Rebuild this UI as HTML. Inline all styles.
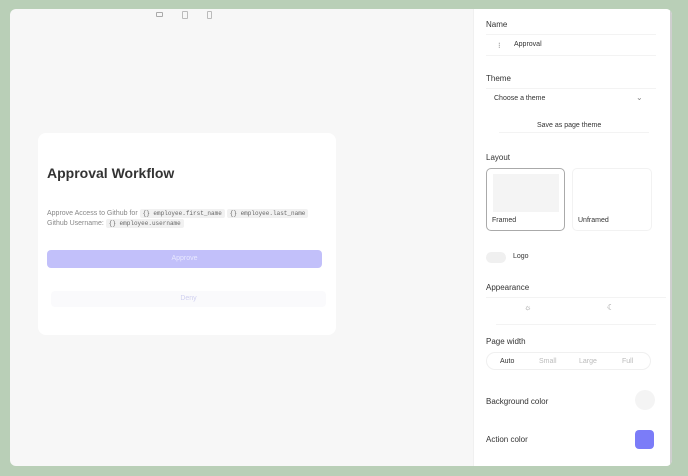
<!DOCTYPE html>
<html><head><style>
*{box-sizing:border-box;margin:0;padding:0}
body{width:688px;height:476px;background:#b9cfb7;font-family:"Liberation Sans",sans-serif;position:relative;overflow:hidden}
.win{position:absolute;left:10px;top:9px;width:662px;height:457px;background:#f7f7f7;border-radius:6px;overflow:hidden}
.panel{position:absolute;left:463px;top:0;width:197px;height:457px;background:#fff;border-left:1px solid #f0f0f0}
.sb{position:absolute;left:660px;top:0;width:2px;height:457px;background:#cfcfcf}
.card{position:absolute;left:28px;top:124px;width:298px;height:202px;background:#fff;border-radius:8px}
.lbl{position:absolute;font-size:8px;color:#333}
.code{font-family:"Liberation Mono",monospace;font-size:6px;background:#f1f1f1;padding:1px 3px;border-radius:2px;color:#666}
.line{position:absolute;height:1px;background:#f3f3f3}
</style></head><body>
<div class="win">
 <div style="position:absolute;left:146px;top:3px;width:7px;height:5px;border:1px solid #aaa;border-radius:1px"></div>
 <div style="position:absolute;left:172px;top:2px;width:6px;height:8px;border:1px solid #bbb;border-radius:1px"></div>
 <div style="position:absolute;left:197px;top:2px;width:5px;height:8px;border:1px solid #bbb;border-radius:1px"></div>
 <div class="card">
  <div style="position:absolute;left:9px;top:32px;font-size:14px;font-weight:bold;color:#333">Approval Workflow</div>
  <div style="position:absolute;left:9px;top:76px;font-size:7px;color:#888;line-height:10px;white-space:nowrap">Approve Access to Github for <span class="code">{} employee.first_name</span> <span class="code">{} employee.last_name</span><br>Github Username: <span class="code">{} employee.username</span></div>
  <div style="position:absolute;left:9px;top:117px;width:275px;height:18px;background:#c2c0fa;border-radius:4px;color:#e8e8ff;font-size:7px;text-align:center;line-height:18px">Approve</div>
  <div style="position:absolute;left:13px;top:158px;width:275px;height:16px;background:#fafafc;border-radius:4px;color:#d0d0f0;font-size:7px;text-align:center;line-height:16px">Deny</div>
 </div>
 <div class="panel">
  <div class="lbl" style="left:12px;top:11px">Name</div>
  <div class="lbl" style="left:24px;top:32px;color:#777">⁝</div>
  <div class="lbl" style="left:40px;top:32px;font-size:7px">Approval</div>
  <div class="line" style="left:12px;top:25px;width:170px"></div>
  <div class="line" style="left:12px;top:46px;width:170px"></div>
  <div class="lbl" style="left:12px;top:65px">Theme</div>
  <div class="lbl" style="left:20px;top:86px;font-size:7px">Choose a theme</div>
  <div class="lbl" style="left:162px;top:84px;color:#888">⌄</div>
  <div class="line" style="left:12px;top:79px;width:170px"></div>
  <div class="lbl" style="left:63px;top:113px;font-size:7px">Save as page theme</div>
  <div class="line" style="left:25px;top:123px;width:150px"></div>
  <div class="lbl" style="left:12px;top:144px">Layout</div>
  <div style="position:absolute;left:12px;top:159px;width:79px;height:63px;border:1px solid #aaa;border-radius:5px">
   <div style="position:absolute;left:6px;top:5px;width:66px;height:38px;background:#f4f4f4"></div>
   <div class="lbl" style="left:5px;top:48px;font-size:7px">Framed</div></div>
  <div style="position:absolute;left:98px;top:159px;width:80px;height:63px;border:1px solid #f2f2f2;border-radius:5px">
   <div class="lbl" style="left:5px;top:48px;font-size:7px">Unframed</div></div>
  <div style="position:absolute;left:12px;top:243px;width:20px;height:11px;background:#f0f0f0;border-radius:6px"></div>
  <div class="lbl" style="left:39px;top:244px;font-size:7px">Logo</div>
  <div class="lbl" style="left:12px;top:274px">Appearance</div>
  <div class="lbl" style="left:50px;top:294px;color:#888;font-size:8px">☼</div>
  <div class="lbl" style="left:133px;top:294px;color:#888;font-size:8px">☾</div>
  <div class="line" style="left:12px;top:288px;width:180px"></div>
  <div class="line" style="left:22px;top:315px;width:160px"></div>
  <div class="lbl" style="left:12px;top:328px">Page width</div>
  <div style="position:absolute;left:12px;top:343px;width:165px;height:18px;border:1px solid #f0f0f0;border-radius:9px"></div>
  <div class="lbl" style="left:26px;top:349px;font-size:7px">Auto</div>
  <div class="lbl" style="left:65px;top:349px;font-size:7px;color:#bbb">Small</div>
  <div class="lbl" style="left:105px;top:349px;font-size:7px;color:#bbb">Large</div>
  <div class="lbl" style="left:148px;top:349px;font-size:7px;color:#bbb">Full</div>
  <div class="lbl" style="left:12px;top:388px">Background color</div>
  <div style="position:absolute;left:161px;top:381px;width:20px;height:20px;border-radius:50%;background:#f4f4f4"></div>
  <div class="lbl" style="left:12px;top:426px">Action color</div>
  <div style="position:absolute;left:161px;top:421px;width:19px;height:19px;border-radius:4px;background:#7b7cf8"></div>
 </div>
 <div class="sb"></div>
</div>
</body></html>
